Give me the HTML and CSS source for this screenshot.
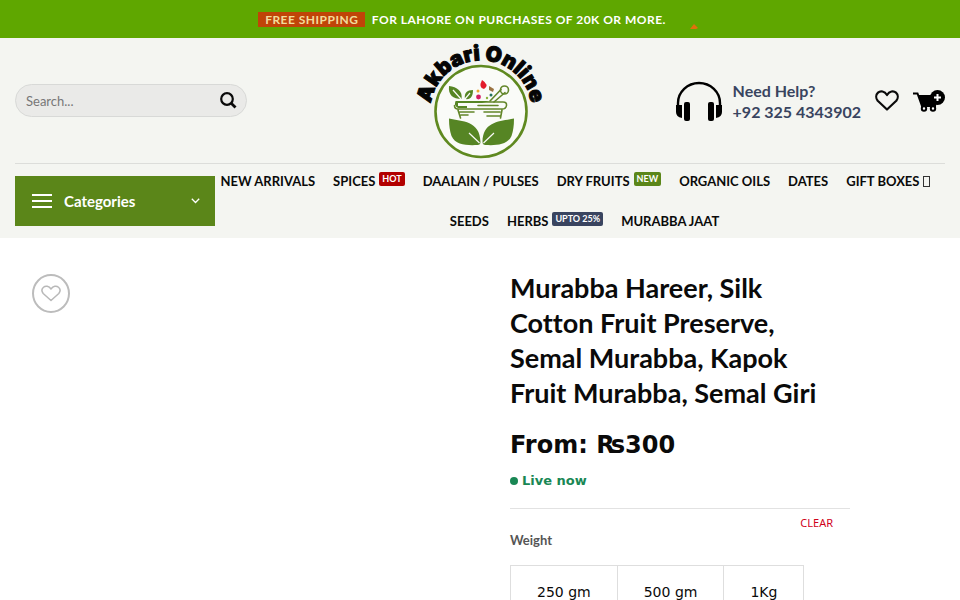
FILE: index.html
```html
<!DOCTYPE html>
<html lang="en">
<head>
<meta charset="utf-8">
<meta name="viewport" content="width=device-width, initial-scale=1">
<title>Murabba Hareer - Akbari Online</title>
<link rel="stylesheet" href="styles.css">
</head>
<body>
<div class="promo">
  <p class="promo-text"><span class="promo-tag">FREE SHIPPING</span> FOR LAHORE ON PURCHASES OF 20K OR MORE.</p>
  <svg class="promo-mark" width="8" height="6" viewBox="0 0 8 6" aria-hidden="true"><path d="M0 5 4 0l4 4-2 1z" fill="#e0700c"/></svg>
</div>

<header class="header">
  <div class="header-main">
    <form class="search" role="search">
      <input class="search-input" type="search" placeholder="Search..." aria-label="Search">
      <button class="search-button" type="button" aria-label="Submit search">
        <svg width="18" height="18" viewBox="0 0 18 18" fill="none" stroke="#0a0a0a"><circle cx="8" cy="7" r="5.800" stroke-width="2.200"/><path d="m12.200 11.200 4.300 4.300" stroke-width="2.800"/></svg>
      </button>
    </form>

    <a class="logo" href="#" aria-label="Akbari Online">
      <svg width="160" height="125" viewBox="400 38 160 125">
        <defs><path id="arc" d="M430.300 111a50.700 50.700 0 0 1 101.400 0"/></defs>
        <circle cx="481" cy="111.500" r="45.500" fill="#fafbf8" stroke="#5f8920" stroke-width="2.600"/>
        <text class="logo-text" text-anchor="middle"><textPath href="#arc" startOffset="50%">Akbari Online</textPath></text>
        <g fill="#568524">
          <path d="M449 86c8 1 14 5 12.500 13C453 99 448 95 449 86zM465 99c-1-6 2-9 8-9 0 6-2 10-8 9z"/>
          <path d="M449 118.500c13 3 31 2 31.500 23.500q0 3-3 3c-11 .500-22 0-26-9q-2.500-7-2.500-17.500z"/>
          <path d="M514 118.500c-13 3-31 2-31.500 23.500q0 3 3 3c11 .500 22 0 26-9q2.500-7 2.500-17.500z"/>
        </g>
        <path d="m469 133 10.500 10M494 133l-10.500 10M453 90l8 9M470 93l-5 6" fill="none" stroke="#fafbf8" stroke-width="1.200"/>
        <g fill="none" stroke="#63862a" stroke-width="1.600" stroke-linecap="round">
          <path d="M456 102h47q4 0 3.500 3.500t-4.500 3.500h-44q-3.500 0-3.500-3.500M458 110l2.500 8M502 110l-1.500 8M460 112h14M461 115h7M478 105.500h20M484 112h16M487 116h13"/>
          <path d="m490 101 11-11.500M494 102l11-9.500"/><circle cx="504.500" cy="90" r="4"/>
        </g>
        <path d="M456 101h34l-8 2h-24v3h9v2h-9q-5-3-2-7z" fill="#568524"/>
        <path d="M482 80q8 5 2 9-6-1-2-9z" fill="#e31b2b"/>
        <circle cx="478.500" cy="97" r="2.400" fill="#d31d62"/>
        <circle cx="478" cy="91" r="1.500" fill="#eda72c"/>
        <path d="m489 86 5 3-1 3-4-2z" fill="#9b7342"/>
        <circle cx="491" cy="95" r="1.500" fill="#237360"/><circle cx="487" cy="98" r="1.200" fill="#8bb43c"/>
      </svg>
    </a>

    <div class="tools">
      <a class="help" href="#">
        <svg width="46" height="40" viewBox="0 0 46 40" aria-hidden="true"><path d="M2 24v-2a21 20 0 0 1 42 0v2" fill="none" stroke="#000" stroke-width="2.400"/><path d="M0 24h6v13q-6-1-6-6zM46 24h-6v13q6-1 6-6z"/><rect x="8" y="21" width="6" height="19" rx="2"/><rect x="32" y="21" width="6" height="19" rx="2"/></svg>
        <span>Need Help?<br>+92 325 4343902</span>
      </a>
      <a class="wish" href="#" aria-label="Wishlist">
        <svg width="24" height="21" viewBox="0 0 24 21" fill="none" stroke="#0a0a0a" stroke-width="2.200" stroke-linejoin="round"><path d="M12 19.500 2.700 10.800C.500 8 1 4.500 3 2.600c2.500-2.200 6.500-1.500 9 2.400 2.500-3.900 6.500-4.600 9-2.400 2 1.900 2.500 5.400.300 8.200z"/></svg>
      </a>
      <a class="cart" href="#" aria-label="Cart">
        <svg width="32" height="22" viewBox="0 0 32 22"><path d="M0 3.500h4.500L9 16h14" fill="none" stroke="#000" stroke-width="2"/><path d="M5 5h20l-2 11H9z"/><circle cx="11" cy="18.500" r="2.200" fill="#fff" stroke="#000" stroke-width="2"/><circle cx="20" cy="18.500" r="2.200" fill="#fff" stroke="#000" stroke-width="2"/><circle cx="24.500" cy="7.500" r="7.500"/><path d="M24.500 4v7M21 7.500h7" stroke="#fff" stroke-width="2"/></svg>
      </a>
    </div>
  </div>

  <div class="header-bottom">
    <button class="categories" type="button">
      <svg width="20" height="14" viewBox="0 0 20 14" stroke="#fff" stroke-width="2"><path d="M0 1h20M0 7h20M0 13h20"/></svg>
      <span>Categories</span>
      <svg class="chevron" width="9" height="6" viewBox="0 0 9 6" fill="none" stroke="#fff" stroke-width="1.300"><path d="m.8.8 3.700 3.700L8.200.8"/></svg>
    </button>
    <nav class="menu">
      <a href="#">NEW ARRIVALS</a>
      <a href="#">SPICES <span class="badge hot">HOT</span></a>
      <a href="#">DAALAIN / PULSES</a>
      <a href="#">DRY FRUITS <span class="badge new">NEW</span></a>
      <a href="#">ORGANIC OILS</a>
      <a href="#">DATES</a>
      <a href="#">GIFT BOXES <span class="missing"></span></a>
      <a href="#">SEEDS</a>
      <a href="#">HERBS <span class="badge sale">UPTO 25%</span></a>
      <a href="#">MURABBA JAAT</a>
    </nav>
  </div>
</header>

<main class="product">
  <section class="gallery" aria-label="Product image">
    <button class="favourite" type="button" aria-label="Add to wishlist">
      <svg width="20" height="17" viewBox="0 0 20 17" fill="none" stroke="#b8b8b8" stroke-width="1.500" stroke-linejoin="round"><path d="M10 15.500 2.200 8.500C.400 6.200.800 3.700 2.500 2.200c2-1.800 5.400-1.300 7.500 1.800 2.100-3.100 5.500-3.600 7.500-1.800 1.700 1.500 2.100 4 .300 6.300z"/></svg>
    </button>
  </section>
  <section class="summary">
    <h1>Murabba Hareer, Silk Cotton Fruit Preserve, Semal Murabba, Kapok Fruit Murabba, Semal Giri</h1>
    <p class="price">From: ₨300</p>
    <p class="live"><span class="dot"></span>Live now</p>
    <form class="options">
      <a class="clear" href="#">CLEAR</a>
      <h2>Weight</h2>
      <div class="weights">
        <button type="button">250 gm</button>
        <button type="button">500 gm</button>
        <button type="button">1Kg</button>
      </div>
    </form>
  </section>
</main>
</body>
</html>
```
FILE: styles.css
```css
* { box-sizing: border-box; }

html { overflow: hidden; }

body {
  margin: 0;
  background: #fff;
  color: #0a0a0a;
  font-family: Lato, "Liberation Sans", sans-serif;
  font-variant-ligatures: none;
}

a { color: inherit; text-decoration: none; }

button { font: inherit; color: inherit; cursor: pointer; }

svg { display: block; flex: none; }

.promo {
  position: relative;
  display: flex;
  align-items: center;
  justify-content: center;
  height: 38px;
  padding-right: 36px;
  background: #5fa700;
  color: #fff;
}

.promo-text {
  margin: 0;
  font-size: 12px;
  font-weight: 700;
  line-height: 15px;
  letter-spacing: 0.04em;
}

.promo-tag {
  display: inline-block;
  margin-right: 3px;
  padding: 0 7px;
  background: #c04408;
  color: #f2dc9c;
}

.promo-mark {
  position: absolute;
  left: calc(50% + 210px);
  top: 24px;
}

.header { background: #f4f5f1; }

.header-main {
  display: grid;
  grid-template-columns: 1fr auto 1fr;
  align-items: center;
  margin: 0 15px;
  border-bottom: 1px solid #dcddda;
}

.search {
  display: flex;
  align-items: center;
  width: 232px;
  height: 33px;
  padding: 0 9px 0 10px;
  border: 1px solid #d8d9d7;
  border-radius: 17px;
  background: #eaeae8;
}

.search-input {
  flex: 1;
  min-width: 0;
  padding: 0;
  border: 0;
  outline: 0;
  background: none;
  font: 13px Lato, sans-serif;
}

.search-input::placeholder { color: #777; }

.search-button {
  padding: 0;
  border: 0;
  background: none;
}

.logo-text {
  font-family: Inter, sans-serif;
  font-size: 21px;
  font-weight: 900;
  fill: #050505;
  stroke: #050505;
  stroke-width: 1px;
}

.tools {
  display: flex;
  align-items: center;
  justify-content: flex-end;
  gap: 14px;
}

.help {
  display: flex;
  align-items: center;
  gap: 11px;
  color: #39445f;
  font-size: 16px;
  font-weight: 700;
  line-height: 21px;
  white-space: nowrap;
}

.header-bottom {
  display: flex;
  align-items: center;
  min-height: 74px;
  padding: 0 15px;
}

.categories {
  display: flex;
  flex: none;
  align-items: center;
  gap: 12px;
  width: 200px;
  height: 50px;
  padding: 0 15px 0 17px;
  border: 0;
  background: #5b8619;
  color: #fff;
  font-size: 15px;
  font-weight: 700;
}

.chevron { margin-left: auto; }

.menu {
  display: flex;
  flex: 1;
  flex-wrap: wrap;
  justify-content: center;
  row-gap: 20px;
  font-size: 13px;
  font-weight: 700;
  line-height: 20px;
}

.menu a {
  display: flex;
  align-items: center;
  gap: 4px;
  margin: 0 9px;
}

.menu a:first-child { margin-left: 0; }
.menu a:last-child { margin-right: 0; }

.badge {
  margin-bottom: 4px;
  padding: 0 3px;
  border-radius: 2px;
  color: #fff;
  font-size: 9px;
  line-height: 14px;
}

.hot { background: #b20000; }
.new { background: #5b8619; }
.sale { background: #39445f; }

.missing {
  width: 7px;
  height: 11px;
  border: 1px solid #333;
}

.product {
  display: grid;
  grid-template-columns: 99fr 68fr 19fr;
  padding: 32px 15px 0;
}

.gallery { padding: 4px 17px; }

.favourite {
  display: flex;
  align-items: center;
  justify-content: center;
  width: 38px;
  height: 39px;
  padding: 0;
  border: 2px solid #bcbcbc;
  border-radius: 50%;
  background: #fff;
}

h1 {
  margin: 0;
  font-size: 27px;
  font-weight: 700;
  line-height: 35px;
}

.price {
  margin: 19px 0 0;
  font-family: "DejaVu Sans", sans-serif;
  font-size: 24px;
  font-weight: 700;
  line-height: 32px;
}

.live {
  display: flex;
  align-items: center;
  gap: 4px;
  margin: 12px 0 19px;
  color: #198754;
  font-family: "DejaVu Sans", sans-serif;
  font-size: 13px;
  font-weight: 700;
  line-height: 16px;
}

.dot {
  width: 8px;
  height: 8px;
  border-radius: 50%;
  background: #198754;
}

.options {
  border-top: 1px solid #e2e2e2;
}

.clear {
  display: block;
  padding: 7px 17px 0 0;
  color: #d0021b;
  font-family: "Noto Sans", sans-serif;
  font-size: 11px;
  line-height: 14px;
  text-align: right;
}

h2 {
  margin: 0;
  color: #555;
  font-size: 13px;
  font-weight: 700;
  line-height: 20px;
}

.weights {
  display: flex;
  margin-top: 15px;
}

.weights button {
  height: 54px;
  padding: 0 26px;
  border: 1px solid #dedede;
  background: #fff;
  font-family: "DejaVu Sans", sans-serif;
  font-size: 14px;
}

.weights button + button { border-left: 0; }
```
